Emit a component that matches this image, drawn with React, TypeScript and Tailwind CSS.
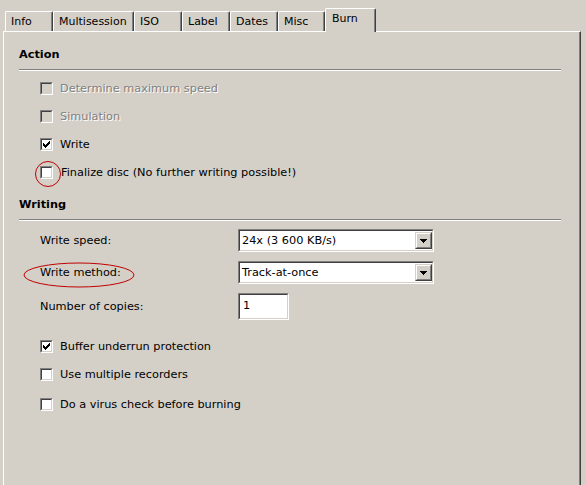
import React from "react";

const Check = () => (
  <svg width="7" height="7" viewBox="0 0 7 7" shapeRendering="crispEdges" className="block">
    <path
      d="M0 2h1v3h-1z M1 3h1v3h-1z M2 4h1v3h-1z M3 3h1v3h-1z M4 2h1v3h-1z M5 1h1v3h-1z M6 0h1v3h-1z"
      fill="#000"
    />
  </svg>
);

function Box({ checked = false, disabled = false }: { checked?: boolean; disabled?: boolean }) {
  return (
    <div className="w-[13px] h-[13px] shrink-0 border border-t-[#808080] border-l-[#808080] border-r-white border-b-white">
      <div
        className={
          "w-[11px] h-[11px] border border-t-[#404040] border-l-[#404040] border-r-[#d4d0c8] border-b-[#d4d0c8] flex items-center justify-center " +
          (disabled ? "bg-[#d4d0c8]" : "bg-white")
        }
      >
        {checked && <Check />}
      </div>
    </div>
  );
}

function CheckRow({
  label,
  checked,
  disabled,
  gap = "gap-[7px]",
}: {
  label: string;
  checked?: boolean;
  disabled?: boolean;
  gap?: string;
}) {
  return (
    <div className={"h-[28px] flex items-center pl-[21px] " + gap}>
      <Box checked={checked} disabled={disabled} />
      <span
        className={
          disabled ? "text-[#808080] [text-shadow:1px_1px_0_#ffffff]" : "text-black"
        }
      >
        {label}
      </span>
    </div>
  );
}

function Heading({ children, className = "" }: { children: React.ReactNode; className?: string }) {
  return (
    <div className={className}>
      <div className="h-[16px] leading-[16px] font-bold text-black">{children}</div>
      <div className="mt-[6px] w-[542px] h-[2px] border-t border-t-[#808080] border-b border-b-white" />
    </div>
  );
}

function Dropdown({ value }: { value: string }) {
  return (
    <div className="w-[196px] h-[23px] border border-t-[#808080] border-l-[#808080] border-r-white border-b-white">
      <div className="w-full h-full border border-t-[#404040] border-l-[#404040] border-r-[#d4d0c8] border-b-[#d4d0c8] bg-white flex items-center">
        <span className="flex-1 pl-[2px] text-black">{value}</span>
        <div className="w-[17px] h-[17px] bg-[#d4d0c8] border border-t-[#d4d0c8] border-l-[#d4d0c8] border-r-[#404040] border-b-[#404040]">
          <div className="w-full h-full border border-t-white border-l-white border-r-[#808080] border-b-[#808080] flex items-center justify-center">
            <svg width="7" height="4" viewBox="0 0 7 4" shapeRendering="crispEdges">
              <path d="M0 0h7v1h-7z M1 1h5v1h-5z M2 2h3v1h-3z M3 3h1v1h-1z" fill="#000" />
            </svg>
          </div>
        </div>
      </div>
    </div>
  );
}

const tabs = [
  { label: "Info", w: "w-[48px]" },
  { label: "Multisession", w: "w-[81px]" },
  { label: "ISO", w: "w-[48px]" },
  { label: "Label", w: "w-[48px]" },
  { label: "Dates", w: "w-[48px]" },
  { label: "Misc", w: "w-[47px]" },
];

export default function App() {
  return (
    <div className="w-[586px] h-[485px] overflow-hidden bg-[#d4d0c8] font-['DejaVu_Sans',sans-serif] text-[11.3px] leading-[13px] select-none">
      <div className="h-[31px] flex items-end pl-[5px] text-[11px]">
        {tabs.map((t) => (
          <div
            key={t.label}
            className={
              t.w +
              " h-[20px] border-l border-t border-l-white border-t-white border-r border-r-[#404040] rounded-tl-[2px] rounded-tr-[2px] shadow-[inset_-1px_0_#808080] pl-[5px] flex items-center text-black whitespace-nowrap overflow-hidden"
            }
          >
            {t.label}
          </div>
        ))}
        <div className="relative z-10 w-[51px] h-[24px] -mb-[1px] bg-[#d4d0c8] border-l border-t border-l-white border-t-white border-r border-r-[#404040] rounded-tl-[2px] rounded-tr-[2px] shadow-[inset_-1px_0_#808080] pl-[6px] pb-[4px] flex items-center text-black">
          Burn
        </div>
      </div>

      <div className="relative ml-[3px] w-[578px] h-[460px] border-l border-t border-l-white border-t-white border-r border-r-[#404040] shadow-[inset_-1px_0_#808080] pl-[15px]">
        <Heading className="pt-[15px]">Action</Heading>
        <div className="mt-[3px]">
          <CheckRow label="Determine maximum speed" disabled />
          <CheckRow label="Simulation" disabled />
          <CheckRow label="Write" checked />
          <CheckRow label="Finalize disc (No further writing possible!)" gap="gap-[8px]" />
        </div>

        <Heading className="mt-[11px]">Writing</Heading>

        <div className="mt-[8px] flex items-center pl-[21px] h-[23px]">
          <span className="w-[198px] text-black">Write speed:</span>
          <Dropdown value="24x (3 600 KB/s)" />
        </div>
        <div className="mt-[9px] flex items-center pl-[21px] h-[23px]">
          <span className="w-[198px] text-black">Write method:</span>
          <Dropdown value="Track-at-once" />
        </div>
        <div className="mt-[9px] flex items-center pl-[21px] h-[27px]">
          <span className="w-[198px] text-black">Number of copies:</span>
          <div className="w-[51px] h-[27px] border border-t-[#808080] border-l-[#808080] border-r-white border-b-white">
            <div className="w-full h-full border border-t-[#404040] border-l-[#404040] border-r-[#d4d0c8] border-b-[#d4d0c8] bg-white pl-[3px] pt-[4px] text-black">
              1
            </div>
          </div>
        </div>

        <div className="mt-[12px]">
          <CheckRow label="Buffer underrun protection" checked />
          <CheckRow label="Use multiple recorders" />
          <div className="mt-[2px]">
            <CheckRow label="Do a virus check before burning" />
          </div>
        </div>

        <svg
          className="absolute left-[30px] top-[128px] pointer-events-none"
          width="28"
          height="28"
          viewBox="0 0 28 28"
        >
          <circle cx="14" cy="14" r="12.5" fill="none" stroke="#c00000" strokeWidth="1" />
        </svg>
        <svg
          className="absolute left-[19px] top-[230px] pointer-events-none"
          width="114"
          height="28"
          viewBox="0 0 114 28"
        >
          <ellipse cx="56" cy="13" rx="55" ry="12" fill="none" stroke="#c00000" strokeWidth="1" />
        </svg>
      </div>
    </div>
  );
}
